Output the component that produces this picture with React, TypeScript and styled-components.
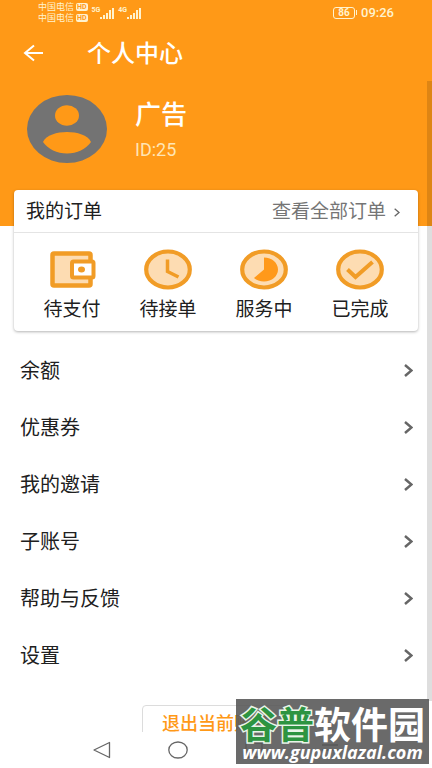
import React from "react";
import styled, { createGlobalStyle } from "styled-components";

const ORANGE = "#ff9917";
const ICON = "#f19c26";
const TINT = "#fddcb2";

const GlobalStyle = createGlobalStyle`
  * { box-sizing: border-box; }
  body {
    margin: 0;
    background: #fff;
    color: #202020;
    font-family: Roboto, "Noto Sans CJK SC", sans-serif;
  }
  button, a { font: inherit; color: inherit; }
  button { border: 0; padding: 0; background: none; cursor: pointer; }
  a { text-decoration: none; }
  svg { display: block; flex: none; }
`;

const Screen = styled.div`
  position: relative;
  display: flex;
  flex-direction: column;
  height: 100vh;
  overflow: hidden;
`;

const StatusBar = styled.header`
  display: flex;
  justify-content: space-between;
  align-items: center;
  height: 25px;
  flex: none;
  padding: 0 38px;
  background: ${ORANGE};
  color: #fff3cf;
`;

const StatusGroup = styled.div`
  display: flex;
  align-items: center;
  gap: 4px;
`;

const Carriers = styled.div`
  display: flex;
  flex-direction: column;
`;

const Carrier = styled.span`
  display: flex;
  align-items: center;
  gap: 2px;
  font-size: 9px;
  line-height: 11px;
`;

const HdBadge = styled.span`
  padding: 0 1px;
  border-radius: 2px;
  background: #fff3cf;
  color: ${ORANGE};
  font-size: 7px;
  font-weight: 700;
  line-height: 8px;
`;

const Signal = styled.span`
  display: flex;
  align-items: flex-start;
  font-size: 7px;
  font-weight: 700;
  line-height: 6px;
`;

const Battery = styled.span`
  display: flex;
  align-items: center;
  justify-content: center;
  width: 22px;
  height: 12px;
  border: 1px solid #fff3cf;
  border-radius: 3px;
  font-size: 10px;
  font-weight: 700;
  line-height: 10px;
`;

const BatteryTip = styled.span`
  width: 1px;
  height: 5px;
  margin-left: -3px;
  background: #fff3cf;
`;

const Time = styled.time`
  font-size: 13px;
  font-weight: 500;
  line-height: 16px;
`;

const AppBar = styled.div`
  display: flex;
  align-items: center;
  gap: 42px;
  height: 56px;
  flex: none;
  padding: 0 22px;
  background: ${ORANGE};
  color: #fff;
`;

const Title = styled.h1`
  margin: 0;
  padding-top: 2px;
  font-size: 24px;
  font-weight: 500;
  line-height: 32px;
`;

const Content = styled.main`
  position: relative;
  flex: 1;
  min-height: 0;
  overflow: hidden;
`;

const ScrollThumb = styled.div`
  position: absolute;
  top: 0;
  right: 0;
  bottom: 31px;
  width: 5px;
  background: rgba(0, 0, 0, 0.13);
`;

const Profile = styled.section`
  display: flex;
  align-items: flex-start;
  gap: 28px;
  padding: 14px 27px 63px;
  background: ${ORANGE};
  color: #fff;
`;

const ProfileText = styled.div`
  display: flex;
  flex-direction: column;
  gap: 7px;
  padding-top: 2px;
`;

const Name = styled.h2`
  margin: 0;
  font-size: 26px;
  font-weight: 500;
  line-height: 36px;
`;

const UserId = styled.span`
  color: #ffe5b5;
  font-size: 18px;
  line-height: 20px;
`;

const Card = styled.section`
  margin: -36px 14px 0;
  border-radius: 4px;
  background: #fff;
  box-shadow: 0 1px 3px rgba(0, 0, 0, 0.3);
`;

const CardHead = styled.div`
  display: flex;
  align-items: center;
  justify-content: space-between;
  height: 43px;
  padding: 2px 18px 0 12px;
  border-bottom: 1px solid #e4e4e4;
  font-size: 19px;
  line-height: 28px;
`;

const CardTitle = styled.h3`
  margin: 0;
  font-size: 19px;
  font-weight: 400;
`;

const AllOrders = styled.a`
  display: flex;
  align-items: center;
  gap: 8px;
  color: #757575;
`;

const Statuses = styled.div`
  display: grid;
  grid-template-columns: repeat(4, 1fr);
  padding: 16px 10px 7px;
`;

const StatusButton = styled.button`
  display: flex;
  flex-direction: column;
  align-items: center;
  gap: 6px;
  font-size: 19px;
  line-height: 28px;
`;

const Menu = styled.nav`
  display: flex;
  flex-direction: column;
  padding-top: 11px;
`;

const MenuRow = styled.a`
  display: flex;
  align-items: center;
  justify-content: space-between;
  height: 57px;
  padding: 0 19px 0 20px;
  font-size: 20px;
  line-height: 28px;
`;

const Logout = styled.button`
  display: block;
  height: 38px;
  margin: 21px auto;
  padding: 0 19px;
  border: 1px solid #dcdcdc;
  border-radius: 4px;
  color: ${ORANGE};
  font-size: 18px;
  font-weight: 500;
  line-height: 18px;
  white-space: nowrap;
`;

const SystemNav = styled.footer`
  display: grid;
  grid-template-columns: repeat(4, 76px);
  justify-content: center;
  align-items: center;
  height: 36px;
  flex: none;
  background: #fff;
`;

const NavButton = styled.button`
  display: flex;
  justify-content: center;
`;

const Watermark = styled.aside`
  position: absolute;
  right: 3px;
  bottom: 4px;
  width: 193px;
  height: 65px;
  display: flex;
  flex-direction: column;
  align-items: center;
  padding-top: 4px;
  background: rgba(88, 88, 88, 0.89);
  color: #fff;
  white-space: nowrap;
`;

const WatermarkName = styled.strong`
  font-family: "Noto Sans CJK SC", sans-serif;
  font-size: 37px;
  font-weight: 700;
  line-height: 40px;
`;

const Green = styled.span`
  color: #2d9441;
  -webkit-text-stroke: 3px #e9f5e9;
  paint-order: stroke fill;
`;

const WatermarkUrl = styled.span`
  font-family: "Open Sans", sans-serif;
  font-size: 18px;
  font-style: italic;
  font-weight: 700;
  line-height: 18px;
`;

function SignalBars({ label }: { label: string }) {
  return (
    <Signal>
      {label}
      <svg width="14" height="12" viewBox="0 0 14 12" fill="#fff3cf" aria-hidden="true">
        <path d="M0 10h2v2H0zM3 8h2v4H3zM6 6h2v6H6zM9 3h2v9H9zM12 1h2v11h-2z" />
      </svg>
    </Signal>
  );
}

function Chevron({ small = false }: { small?: boolean }) {
  return (
    <svg
      width={small ? 6 : 9}
      height={small ? 9 : 13}
      viewBox="0 0 9 13"
      preserveAspectRatio="none"
      fill="none"
      stroke="#666"
      strokeWidth={small ? 2 : 2.5}
      aria-hidden="true"
    >
      <path d="M1 1l6.5 5.5L1 12" />
    </svg>
  );
}

function Avatar() {
  return (
    <svg width="80" height="68" viewBox="0 0 80 68" role="img" aria-label="头像">
      <ellipse cx="40" cy="34" rx="40" ry="34" fill="#737373" />
      <ellipse cx="40" cy="20.500" rx="12" ry="10.300" fill={ORANGE} />
      <path d="M16 47C19 40 30 37 40 37s21 3 24 10c-5 7-14 11.500-24 11.500S21 54 16 47z" fill={ORANGE} />
    </svg>
  );
}

function WalletIcon() {
  return (
    <svg width="48" height="41" viewBox="0 0 48 41" aria-hidden="true">
      <rect x="4.500" y="4.500" width="38" height="32" rx="1.500" fill={TINT} stroke={ICON} strokeWidth="4.500" />
      <rect x="24" y="12.500" width="21.500" height="16" rx="1.500" fill="#fff" stroke={ICON} strokeWidth="4" />
      <ellipse cx="33.500" cy="20.500" rx="3.500" ry="3" fill={ICON} />
    </svg>
  );
}

function RoundIcon({ children }: { children: React.ReactNode }) {
  return (
    <svg width="48" height="41" viewBox="0 0 48 41" aria-hidden="true">
      <ellipse cx="24" cy="20.500" rx="21.800" ry="18" fill={TINT} stroke={ICON} strokeWidth="4.200" />
      {children}
    </svg>
  );
}

const statuses = [
  { label: "待支付", icon: <WalletIcon /> },
  {
    label: "待接单",
    icon: (
      <RoundIcon>
        <path d="M23.500 10.500v12l11 5.500" fill="none" stroke={ICON} strokeWidth="3.500" />
      </RoundIcon>
    ),
  },
  {
    label: "服务中",
    icon: (
      <RoundIcon>
        <path d="M24 8.500C32 8.500 38 14 38 20.500S32 32.500 24 32.500c-4 0-7.500-1.400-10-3.500l10-8.500z" fill="#ff991a" />
      </RoundIcon>
    ),
  },
  {
    label: "已完成",
    icon: (
      <RoundIcon>
        <path d="M11.500 20.500l8 7.500L36.500 13" fill="none" stroke={ICON} strokeWidth="4" />
      </RoundIcon>
    ),
  },
];

const menu = ["余额", "优惠券", "我的邀请", "子账号", "帮助与反馈", "设置"];

export default function App() {
  return (
    <Screen>
      <GlobalStyle />
      <StatusBar>
        <StatusGroup>
          <Carriers>
            <Carrier>中国电信<HdBadge>HD</HdBadge></Carrier>
            <Carrier>中国电信<HdBadge>HD</HdBadge></Carrier>
          </Carriers>
          <SignalBars label="5G" />
          <SignalBars label="4G" />
        </StatusGroup>
        <StatusGroup>
          <Battery>86</Battery>
          <BatteryTip />
          <Time>09:26</Time>
        </StatusGroup>
      </StatusBar>
      <AppBar>
        <button type="button" aria-label="返回">
          <svg width="23" height="18" viewBox="0 0 23 18" fill="none" stroke="#fff" strokeWidth="2" aria-hidden="true">
            <path d="M21 9H3M12 1.500L3 9l9 7.500" />
          </svg>
        </button>
        <Title>个人中心</Title>
      </AppBar>
      <Content>
        <Profile>
          <Avatar />
          <ProfileText>
            <Name>广告</Name>
            <UserId>ID:25</UserId>
          </ProfileText>
        </Profile>
        <Card>
          <CardHead>
            <CardTitle>我的订单</CardTitle>
            <AllOrders href="#orders">
              查看全部订单
              <Chevron small />
            </AllOrders>
          </CardHead>
          <Statuses>
            {statuses.map((s) => (
              <StatusButton key={s.label} type="button">
                {s.icon}
                {s.label}
              </StatusButton>
            ))}
          </Statuses>
        </Card>
        <Menu>
          {menu.map((label) => (
            <MenuRow key={label} href="#menu">
              {label}
              <Chevron />
            </MenuRow>
          ))}
        </Menu>
        <Logout type="button">退出当前账号</Logout>
        <ScrollThumb />
      </Content>
      <SystemNav>
        <NavButton type="button" aria-label="返回键">
          <svg width="18" height="18" viewBox="0 0 18 18" fill="none" stroke="#666" strokeWidth="1.300" strokeLinejoin="round">
            <path d="M16.500 1.500v15L1 9z" />
          </svg>
        </NavButton>
        <NavButton type="button" aria-label="主屏幕">
          <svg width="20" height="18" viewBox="0 0 20 18" fill="none" stroke="#666" strokeWidth="1.300">
            <ellipse cx="10" cy="9" rx="9.200" ry="8" />
          </svg>
        </NavButton>
        <NavButton type="button" aria-label="最近任务">
          <svg width="18" height="16" viewBox="0 0 18 16" fill="none" stroke="#555" strokeWidth="1.300">
            <path d="M1 1h16v14H1z" />
          </svg>
        </NavButton>
        <NavButton type="button" aria-label="菜单">
          <svg width="18" height="16" viewBox="0 0 18 16" fill="none" stroke="#555" strokeWidth="1.300">
            <path d="M1 3h16M1 8h16" />
          </svg>
        </NavButton>
      </SystemNav>
      <Watermark>
        <WatermarkName>
          <Green>谷普</Green>软件园
        </WatermarkName>
        <WatermarkUrl>www.gupuxlazal.com</WatermarkUrl>
      </Watermark>
    </Screen>
  );
}
